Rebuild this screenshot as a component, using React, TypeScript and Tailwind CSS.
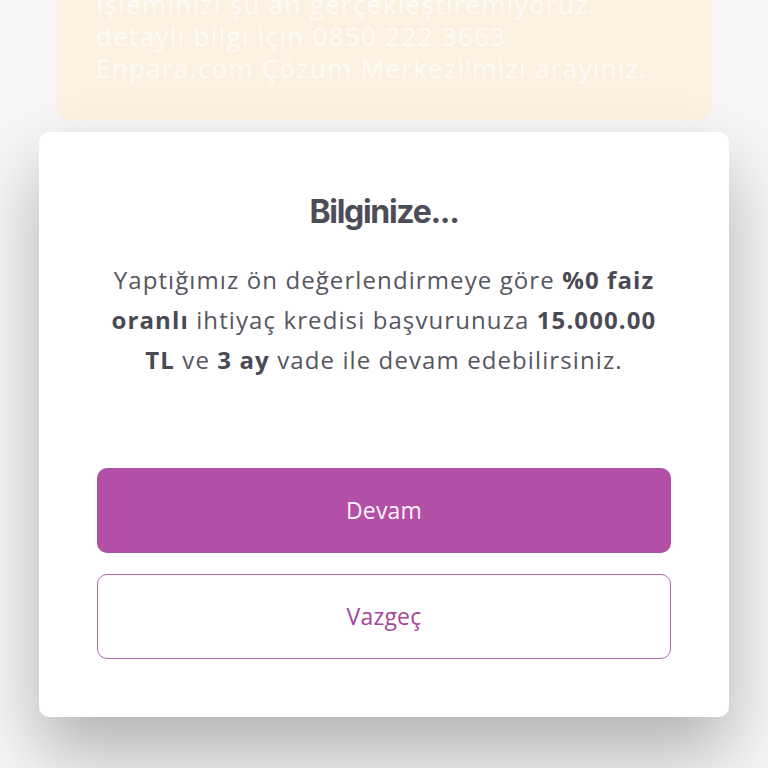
export default function App() {
  return (
    <div className="min-h-[768px] w-full overflow-hidden bg-[#f6f6f7]" style={{ fontFamily: "'Open Sans', 'Noto Sans', sans-serif" }}>
      <div className="mx-[56px] -mt-[40px] h-[160px] rounded-[14px] bg-[#fdf1e2] px-[40px] pt-[28px]">
        <p className="whitespace-nowrap text-[26px] leading-[32px] tracking-[1.3px] text-[#fffbf6]">
          İşleminizi şu an gerçekleştiremiyoruz.
          <br />
          detaylı bilgi için 0850 222 3663
          <br />
          Enpara.com Çözüm Merkezi&apos;mizi arayınız.
        </p>
      </div>
      <div className="mx-[39px] mt-[12px] flex h-[585px] flex-col rounded-[10px] bg-white px-[30px] pt-[60px] pb-[58px] shadow-[0_36px_70px_rgba(0,0,0,0.28)]">
        <h2 className="text-center text-[32px] font-bold leading-[40px] tracking-[-1.3px] text-[#4d4d57]" style={{ fontFamily: "Inter, sans-serif" }}>
          Bilginize...
        </h2>
        <p className="mt-[28px] whitespace-nowrap text-center text-[24px] leading-[40px] tracking-[1.1px] text-[#56565f]">
          Yaptığımız ön değerlendirmeye göre <b className="font-bold text-[#4a4a54]">%0 faiz</b>
          <br />
          <b className="font-bold text-[#4a4a54]">oranlı</b> ihtiyaç kredisi başvurunuza <b className="font-bold text-[#4a4a54]">15.000.00</b>
          <br />
          <b className="font-bold text-[#4a4a54]">TL</b> ve <b className="font-bold text-[#4a4a54]">3 ay</b> vade ile devam edebilirsiniz.
        </p>
        <div className="mx-[28px] mt-auto flex flex-col gap-[21px]">
          <button className="flex h-[85px] items-center justify-center rounded-[10px] bg-[#b24fa6] text-[23px] font-medium tracking-[0.2px] text-[#fdf2fb]">
            Devam
          </button>
          <button className="flex h-[85px] items-center justify-center rounded-[10px] border-[1.5px] border-[#b06aa6] bg-white text-[23px] tracking-[0.2px] text-[#a4479a]">
            Vazgeç
          </button>
        </div>
      </div>
    </div>
  );
}
